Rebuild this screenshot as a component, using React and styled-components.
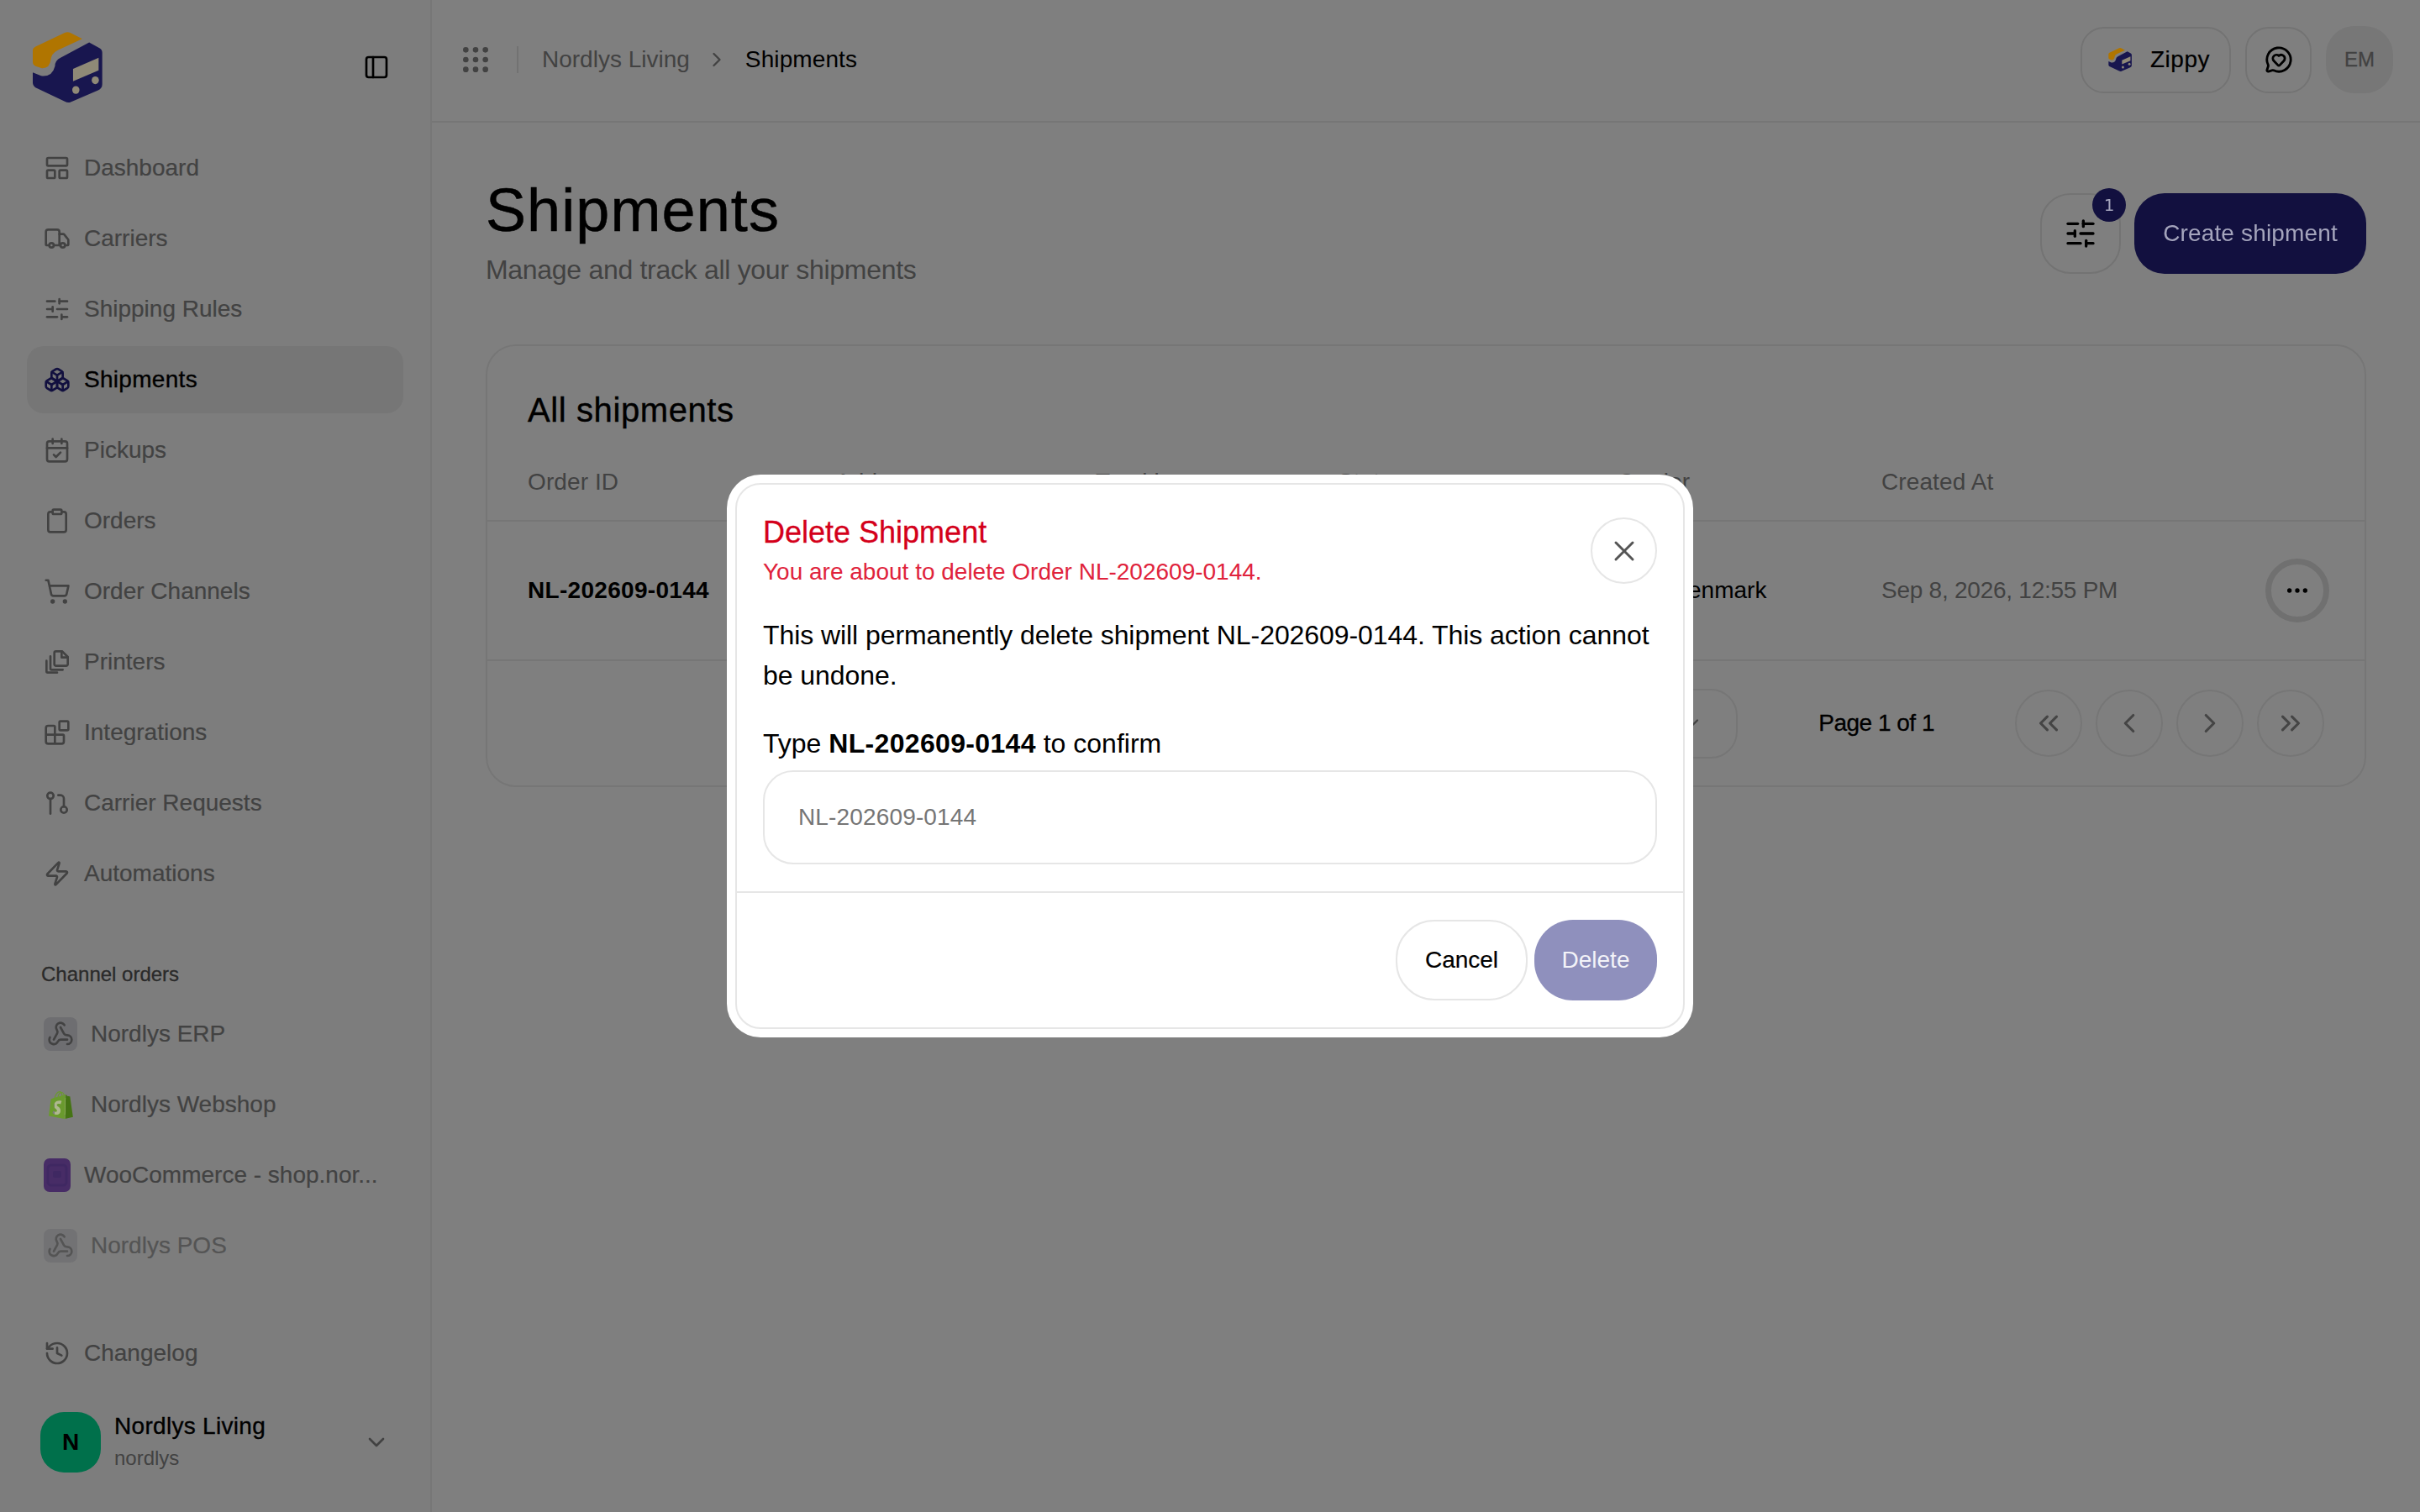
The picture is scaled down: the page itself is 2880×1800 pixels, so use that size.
import React from 'react';
import styled, { createGlobalStyle } from 'styled-components';
import {
  LayoutPanelTop, Truck, SlidersHorizontal, Boxes, CalendarCheck, Clipboard, ShoppingCart,
  Blocks, Zap, History, Webhook, ChevronDown, ChevronRight, ChevronLeft, ChevronsLeft, ChevronsRight,
  PanelLeft, Grip, MessageCircleHeart, X, Ellipsis,
} from 'lucide-react';
import { SiShopify } from 'react-icons/si';

const Global = createGlobalStyle`
  html, body { margin: 0; padding: 0; background: #fff; }
  body { font-family: "Liberation Sans", Arial, sans-serif; color: #000; }
  * { box-sizing: border-box; }
`;

const Shell = styled.div`
  width: 2880px; height: 1800px; display: grid; grid-template-columns: 514px 1fr; overflow: hidden; background: #fff;
`;
const Sidebar = styled.aside`
  height: 1800px; background: #fbfbfb; border-right: 2px solid #efefef; padding: 0 32px; display: flex; flex-direction: column;
`;
const Brand = styled.div`
  height: 160px; display: flex; align-items: center; justify-content: space-between; padding: 0 16px 0 6px; color: #000; flex: none;
`;
const LogoSvg = styled.svg`
  display: block; position: relative; z-index: 60; flex: none;
`;
const NavList = styled.nav`
  display: flex; flex-direction: column; gap: 4px; flex: none;
`;
const NavItem = styled.div`
  height: 80px; border-radius: 20px; padding: 0 20px; display: flex; align-items: center; gap: 16px; font-size: 28px;
  color: ${p => (p.$active ? '#000' : '#858585')};
  background: ${p => (p.$active ? '#ececec' : 'transparent')};
  letter-spacing: ${p => (p.$active ? '0.3px' : '0')};
  -webkit-text-stroke: ${p => (p.$active ? '0.35px #000' : '0.2px #858585')};
  & > svg { flex: none; color: ${p => (p.$active ? '#24207e' : '#858585')}; }
`;
const GroupLabel = styled.div`
  font-size: 24px; color: #555; -webkit-text-stroke: 0.3px #555; line-height: 40px; margin: 60px 0 11px 17px; flex: none;
`;
const ChannelItem = styled.div`
  height: 80px; padding: 0 20px; display: flex; align-items: center; gap: 16px; font-size: 28px; color: #858585; -webkit-text-stroke: 0.2px #858585; opacity: ${p => (p.$dim ? 0.7 : 1)};
`;
const ChannelText = styled.span`
  min-width: 0; white-space: nowrap;
`;
const WebhookTile = styled.span`
  width: 40px; height: 40px; border-radius: 8px; background: #dcdce2; color: #858585; display: flex; align-items: center; justify-content: center; flex: none;
`;
const ShopTile = styled.span`
  position: relative; width: 40px; height: 40px; display: flex; align-items: center; justify-content: center; flex: none;
  &::before { content: ''; position: absolute; left: 13px; top: 12px; width: 14px; height: 20px; background: #aeb88e; z-index: 60; }
  & > svg:last-child { position: relative; z-index: 61; }
`;
const WooTile = styled.svg`
  width: 32px; height: 40px; flex: none; display: block;
`;
const Spacer = styled.div`
  flex: none; height: 48px;
`;
const Account = styled.div`
  margin-top: 29px; display: flex; align-items: center; padding: 0 0 0 16px; gap: 16px; flex: none;
`;
const Avatar = styled.div`
  width: 72px; height: 72px; border-radius: 28px; background: #00e096; display: flex; align-items: center; justify-content: center;
  font-size: 28px; font-weight: 700; color: #000; flex: none;
`;
const AccountText = styled.div`
  flex: 1; min-width: 0; display: flex; flex-direction: column;
`;
const AccountName = styled.div`
  font-size: 28px; line-height: 36px; color: #000; letter-spacing: 0.3px; -webkit-text-stroke: 0.35px #000;
`;
const AccountSub = styled.div`
  font-size: 24px; line-height: 36px; margin-top: 2px; color: #858585;
`;
const AccountChevron = styled.span`
  color: #858585; display: flex; margin-right: 16px;
`;

const Main = styled.main`
  min-width: 0; display: flex; flex-direction: column;
`;
const TopBar = styled.header`
  height: 146px; border-bottom: 2px solid #ececec; display: flex; align-items: center; justify-content: space-between; padding: 0 32px 2px 32px; flex: none;
`;
const Crumbs = styled.div`
  display: flex; align-items: center; font-size: 28px; color: #858585;
  & > svg { flex: none; }
`;
const Divider = styled.span`
  width: 2px; height: 32px; background: #e4e4e4; margin: 0 28px 0 29px;
`;
const CrumbCurrent = styled.span`
  color: #000; letter-spacing: 0.1px;
`;
const Sep = styled.span`
  display: flex; margin: 0 20px 0 18px; color: #858585;
`;
const TopActions = styled.div`
  display: flex; align-items: center; gap: 17px;
`;
const ZippyBtn = styled.div`
  width: 179px; height: 79px; border: 2px solid #e6e6e6; border-radius: 28px; display: flex; align-items: center; gap: 22px; padding-left: 31px;
  font-size: 28px; letter-spacing: 0.5px; color: #000; -webkit-text-stroke: 0.2px #000;
`;
const ChatBtn = styled.div`
  width: 79px; height: 79px; border: 2px solid #e6e6e6; border-radius: 28px; display: flex; align-items: center; justify-content: center; color: #000;
`;
const EmBadge = styled.div`
  width: 80px; height: 80px; border-radius: 34px; background: #eeeeee; color: #858585; display: flex; align-items: center; justify-content: center; font-size: 24px; -webkit-text-stroke: 0.3px #858585;
`;

const Page = styled.div`
  padding: 64px;
`;
const PageHead = styled.div`
  display: flex; align-items: center; justify-content: space-between;
`;
const Title = styled.h1`
  margin: 0; font-size: 72px; line-height: 80px; font-weight: 400; letter-spacing: 1.1px; color: #000; -webkit-text-stroke: 0.5px #000;
`;
const Sub = styled.p`
  margin: 7px 0 0; font-size: 32px; line-height: 48px; color: #858585; letter-spacing: -0.3px;
`;
const HeadActions = styled.div`
  display: flex; align-items: center; gap: 16px;
`;
const FilterBtn = styled.div`
  position: relative; width: 96px; height: 96px; border: 2px solid #e6e6e6; border-radius: 36px; display: flex; align-items: center; justify-content: center; color: #000;
`;
const Badge = styled.span`
  position: absolute; top: -8px; right: -8px; width: 40px; height: 40px; border-radius: 50%; background: #24207e; display: flex; align-items: center; justify-content: center;
  font-family: "DejaVu Sans", sans-serif; font-size: 20px;
`;
const OnNavy = styled.span`
  position: relative; z-index: 60; color: #a4a4bc;
`;
const PrimaryBtn = styled.div`
  width: 276px; height: 96px; border-radius: 36px; background: #24207e; display: flex; align-items: center; justify-content: center; font-size: 28px; letter-spacing: 0.15px;
`;

const Card = styled.section`
  margin-top: 65px; border: 2px solid #ececec; border-radius: 36px;
`;
const CardTitle = styled.h2`
  margin: 0; padding: 48px 48px 0; height: 116px; font-size: 40px; line-height: 56px; font-weight: 400; letter-spacing: 0.6px; color: #000; -webkit-text-stroke: 0.4px #000;
`;
const GridRow = styled.div`
  display: grid; grid-template-columns: 366px 310px 288px 333px 314px 457px 1fr; padding: 0 41px 0 48px; align-items: center; border-bottom: 2px solid #ececec;
  height: ${p => p.$h}px;
`;
const HeadCell = styled.div`
  font-size: 28px; color: #858585; letter-spacing: 0.1px;
`;
const OrderCell = styled.div`
  font-size: 28px; font-weight: 700; color: #000; letter-spacing: 0.3px;
`;
const Cell = styled.div`
  font-size: 28px; color: ${p => (p.$muted ? '#858585' : '#000')}; letter-spacing: ${p => (p.$muted ? '-0.25px' : '0')}; white-space: nowrap;
`;
const RowAction = styled.div`
  width: 76px; height: 76px; border-radius: 50%; border: 7px solid #e0e0e0; display: flex; align-items: center; justify-content: center; color: #000;
`;
const Pager = styled.div`
  height: 148px; display: flex; align-items: center; justify-content: flex-end; padding: 0 48px;
`;
const RowsSelect = styled.div`
  width: 160px; height: 83px; border: 2px solid #ececec; border-radius: 32px; display: flex; align-items: center; justify-content: space-between; padding: 0 39px 0 28px; font-size: 28px; color: #858585;
`;
const PageLabel = styled.div`
  margin: 0 96px; font-size: 28px; color: #000; letter-spacing: -0.5px; -webkit-text-stroke: 0.3px #000; white-space: nowrap;
`;
const PagerBtns = styled.div`
  display: flex; gap: 16px;
`;
const PagerBtn = styled.div`
  width: 80px; height: 80px; border-radius: 50%; border: 2px solid #ececec; display: flex; align-items: center; justify-content: center; color: #8a8a8a;
`;

const Overlay = styled.div`
  position: fixed; inset: 0; background: rgba(0, 0, 0, 0.5); z-index: 50; display: flex; align-items: center; justify-content: center;
`;
const Modal = styled.div`
  width: 1150px; background: #fff; border-radius: 40px; padding: 10px;
`;
const ModalInner = styled.div`
  border: 2px solid #e6e6e6; border-radius: 30px;
`;
const ModalBody = styled.div`
  padding: 35px 31px 32px;
`;
const ModalHead = styled.div`
  display: flex; justify-content: space-between; align-items: flex-start;
`;
const ModalTitle = styled.h3`
  margin: 0; font-size: 36px; line-height: 44px; font-weight: 400; color: #d4001a; letter-spacing: 0; -webkit-text-stroke: 0.3px #d4001a;
`;
const ModalSub = styled.p`
  margin: 5px 0 0; font-size: 28px; line-height: 40px; color: #e0233c; letter-spacing: 0;
`;
const CloseBtn = styled.div`
  width: 79px; height: 79px; margin-top: 4px; border-radius: 50%; border: 2px solid #e6e6e6; display: flex; align-items: center; justify-content: center; color: #555;
`;
const BodyText = styled.p`
  margin: 31px 0 0; font-size: 32px; line-height: 48px; letter-spacing: -0.07px; color: #000;
`;
const ConfirmLabel = styled.div`
  margin-top: 35px; font-size: 32px; line-height: 44px; color: #000;
  & b { font-weight: 700; letter-spacing: 0.33px; }
`;
const ConfirmInput = styled.input`
  display: block; width: 100%; height: 112px; margin-top: 10px; border: 2px solid #e6e6e6; border-radius: 36px; padding: 0 40px; outline: none; background: #fff;
  font-family: inherit; font-size: 28px; letter-spacing: 0.15px; color: #000;
  &::placeholder { color: #757575; opacity: 1; }
`;
const ModalFoot = styled.div`
  border-top: 2px solid #e6e6e6; padding: 32px 31px; display: flex; justify-content: flex-end; gap: 8px;
`;
const CancelBtn = styled.div`
  width: 157px; height: 96px; border-radius: 46px; border: 2px solid #e6e6e6; display: flex; align-items: center; justify-content: center; font-size: 28px; color: #000; -webkit-text-stroke: 0.2px #000;
`;
const DeleteBtn = styled.div`
  width: 146px; height: 96px; border-radius: 46px; background: #8f90bd; display: flex; align-items: center; justify-content: center; font-size: 28px; color: #f3f3f8;
`;

const Logo = ({ size }) => (
  <LogoSvg width={size} height={size} viewBox="113 112 252 254" aria-hidden="true">
    <path fill="#b07500" d="M115 178 Q115 170 125 165 L230 115 Q240 110 250 115 L293 137 L205 178 Q182 190 180 212 Q176 244 148 243 L125 235 Q115 230 115 220 Z" />
    <path fill="#18164f" d="M318 150 L355 170 Q365 175 365 187 L365 300 Q365 315 350 322 L250 365 Q240 368 230 362 L125 312 Q115 305 115 295 L115 258 L145 270 Q185 275 195 235 Q195 215 215 205 Z" />
    <path fill="#8f8977" d="M260 245 L352 205 L352 250 L260 290 Z" />
    <ellipse cx="270" cy="321" rx="13" ry="14" fill="#8f8977" />
    <ellipse cx="340" cy="286" rx="13" ry="14" fill="#8f8977" />
  </LogoSvg>
);

const PrintersIcon = () => (
  <svg width="32" height="32" viewBox="0 0 24 24" fill="none" stroke="currentColor" strokeWidth="2" strokeLinecap="round" strokeLinejoin="round">
    <path d="M11 2.5h5.5l5 5V14a1.5 1.5 0 0 1-1.5 1.5h-9A1.5 1.5 0 0 1 9.500 14V4A1.5 1.5 0 0 1 11 2.500Z" />
    <path d="M16 2.500V8h5.500" />
    <path d="M6 7v11a1 1 0 0 0 1 1h10" />
    <path d="M2.500 11v9.500a1 1 0 0 0 1 1H12" />
  </svg>
);

const RequestsIcon = () => (
  <svg width="32" height="32" viewBox="0 0 24 24" fill="none" stroke="currentColor" strokeWidth="2" strokeLinecap="round" strokeLinejoin="round">
    <circle cx="6" cy="5.500" r="2.800" />
    <path d="M6 8.300V21.500" />
    <circle cx="18" cy="18" r="2.800" />
    <path d="M13 5h2a3 3 0 0 1 3 3v7.200" />
  </svg>
);

const navTop = [
  ['Dashboard', <LayoutPanelTop size={32} />],
  ['Carriers', <Truck size={32} />],
  ['Shipping Rules', <SlidersHorizontal size={32} />],
  ['Shipments', <Boxes size={32} />, true],
  ['Pickups', <CalendarCheck size={32} />],
  ['Orders', <Clipboard size={32} />],
  ['Order Channels', <ShoppingCart size={32} />],
  ['Printers', <PrintersIcon />],
  ['Integrations', <Blocks size={32} />],
  ['Carrier Requests', <RequestsIcon />],
  ['Automations', <Zap size={32} />],
];

export default function App() {
  return (
    <>
      <Global />
      <Shell>
        <Sidebar>
          <Brand>
            <Logo size={84} />
            <PanelLeft size={32} />
          </Brand>
          <NavList>
            {navTop.map(([label, icon, active]) => (
              <NavItem key={label} $active={active}>{icon}<span>{label}</span></NavItem>
            ))}
          </NavList>
          <GroupLabel>Channel orders</GroupLabel>
          <NavList>
            <ChannelItem>
              <WebhookTile><Webhook size={32} /></WebhookTile>
              <ChannelText>Nordlys ERP</ChannelText>
            </ChannelItem>
            <ChannelItem>
              <ShopTile>
                <svg width="0" height="0" style={{ position: 'absolute' }}>
                  <defs>
                    <linearGradient id="shopFill" x1="0" y1="0" x2="1" y2="0">
                      <stop offset="0.68" stopColor="#6a9a2e" />
                      <stop offset="0.68" stopColor="#457414" />
                    </linearGradient>
                  </defs>
                </svg>
                <SiShopify size={33} fill="url(#shopFill)" />
              </ShopTile>
              <ChannelText>Nordlys Webshop</ChannelText>
            </ChannelItem>
            <ChannelItem>
              <WooTile viewBox="0 0 32 40">
                <rect width="32" height="40" rx="7" fill="#8f58cc" />
                <rect x="5" y="8" width="22" height="24" rx="4" fill="none" stroke="#7e50c4" strokeWidth="3" />
                <rect x="11" y="15" width="10" height="8" rx="2" fill="#7e50c4" />
              </WooTile>
              <ChannelText>WooCommerce - shop.nor...</ChannelText>
            </ChannelItem>
            <ChannelItem $dim>
              <WebhookTile><Webhook size={32} /></WebhookTile>
              <ChannelText>Nordlys POS</ChannelText>
            </ChannelItem>
          </NavList>
          <Spacer />
          <NavItem><History size={32} /><span>Changelog</span></NavItem>
          <Account>
            <Avatar>N</Avatar>
            <AccountText>
              <AccountName>Nordlys Living</AccountName>
              <AccountSub>nordlys</AccountSub>
            </AccountText>
            <AccountChevron><ChevronDown size={32} /></AccountChevron>
          </Account>
        </Sidebar>
        <Main>
          <TopBar>
            <Crumbs>
              <Grip size={40} />
              <Divider />
              <span>Nordlys Living</span>
              <Sep><ChevronRight size={28} /></Sep>
              <CrumbCurrent>Shipments</CrumbCurrent>
            </Crumbs>
            <TopActions>
              <ZippyBtn><Logo size={28} /><span>Zippy</span></ZippyBtn>
              <ChatBtn><MessageCircleHeart size={34} /></ChatBtn>
              <EmBadge>EM</EmBadge>
            </TopActions>
          </TopBar>
          <Page>
            <PageHead>
              <div>
                <Title>Shipments</Title>
                <Sub>Manage and track all your shipments</Sub>
              </div>
              <HeadActions>
                <FilterBtn>
                  <SlidersHorizontal size={40} />
                  <Badge><OnNavy>1</OnNavy></Badge>
                </FilterBtn>
                <PrimaryBtn><OnNavy>Create shipment</OnNavy></PrimaryBtn>
              </HeadActions>
            </PageHead>
            <Card>
              <CardTitle>All shipments</CardTitle>
              <GridRow $h={93}>
                <HeadCell>Order ID</HeadCell>
                <HeadCell>Address</HeadCell>
                <HeadCell>Tracking</HeadCell>
                <HeadCell>Status</HeadCell>
                <HeadCell>Carrier</HeadCell>
                <HeadCell>Created At</HeadCell>
                <span />
              </GridRow>
              <GridRow $h={166}>
                <OrderCell>NL-202609-0144</OrderCell>
                <span />
                <span />
                <span />
                <Cell>GLS Denmark</Cell>
                <Cell $muted>Sep 8, 2026, 12:55 PM</Cell>
                <RowAction><Ellipsis size={32} /></RowAction>
              </GridRow>
              <Pager>
                <RowsSelect><span /><ChevronDown size={28} /></RowsSelect>
                <PageLabel>Page 1 of 1</PageLabel>
                <PagerBtns>
                  <PagerBtn><ChevronsLeft size={38} /></PagerBtn>
                  <PagerBtn><ChevronLeft size={38} /></PagerBtn>
                  <PagerBtn><ChevronRight size={38} /></PagerBtn>
                  <PagerBtn><ChevronsRight size={38} /></PagerBtn>
                </PagerBtns>
              </Pager>
            </Card>
          </Page>
        </Main>
      </Shell>
      <Overlay>
        <Modal>
          <ModalInner>
            <ModalBody>
              <ModalHead>
                <div>
                  <ModalTitle>Delete Shipment</ModalTitle>
                  <ModalSub>You are about to delete Order NL-202609-0144.</ModalSub>
                </div>
                <CloseBtn><X size={40} strokeWidth={1.8} /></CloseBtn>
              </ModalHead>
              <BodyText>This will permanently delete shipment NL-202609-0144. This action cannot be undone.</BodyText>
              <ConfirmLabel>Type <b>NL-202609-0144</b> to confirm</ConfirmLabel>
              <ConfirmInput placeholder="NL-202609-0144" readOnly />
            </ModalBody>
            <ModalFoot>
              <CancelBtn>Cancel</CancelBtn>
              <DeleteBtn>Delete</DeleteBtn>
            </ModalFoot>
          </ModalInner>
        </Modal>
      </Overlay>
    </>
  );
}
